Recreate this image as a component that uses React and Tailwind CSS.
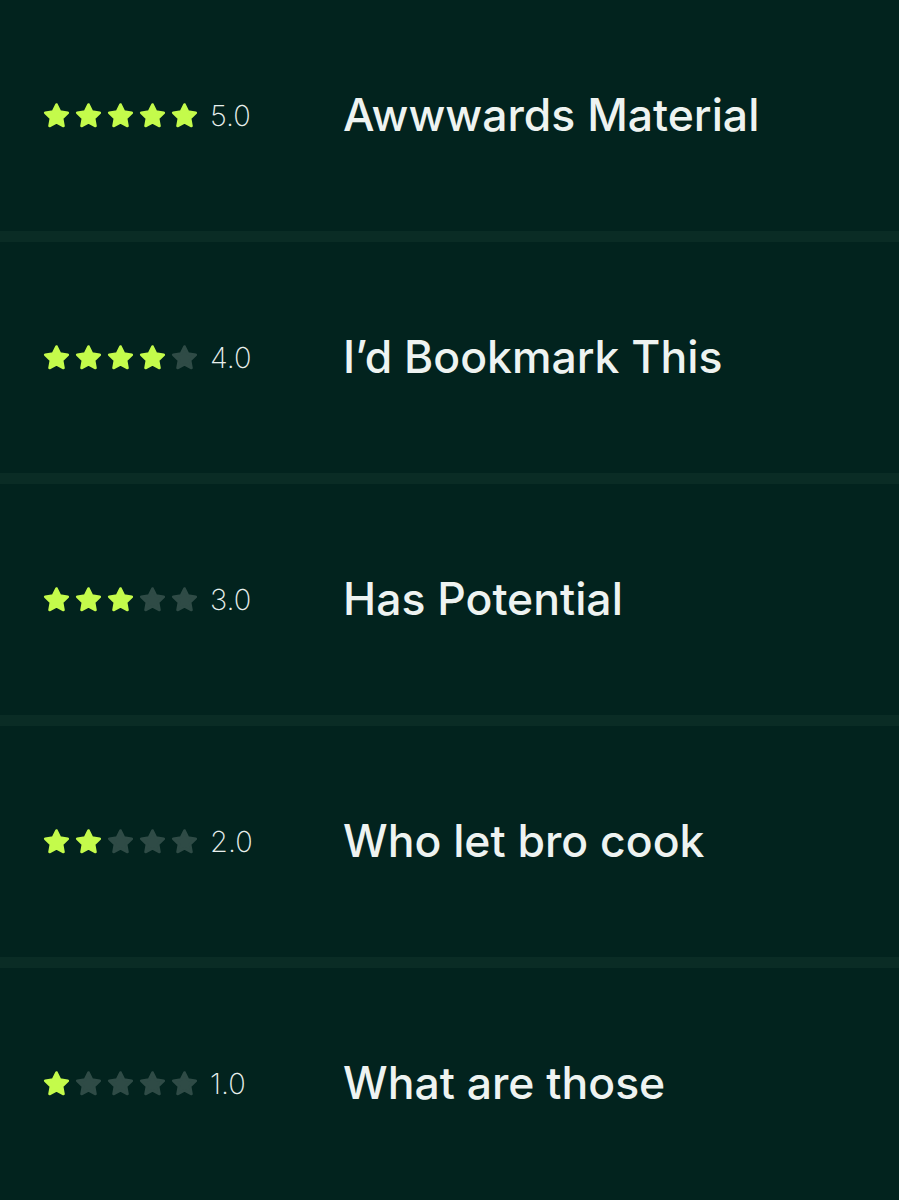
const ratings = [
  { score: 5, label: "Awwwards Material" },
  { score: 4, label: "I’d Bookmark This" },
  { score: 3, label: "Has Potential" },
  { score: 2, label: "Who let bro cook" },
  { score: 1, label: "What are those" },
];

function Star({ on }) {
  return (
    <svg
      width="27"
      height="27"
      viewBox="0 0 24 24"
      className={on ? "text-[#c4fb4b]" : "text-[#2f4b46]"}
    >
      <path
        d="M12 2.3L15.06 8.59 21.99 9.56 16.95 14.41 18.17 21.29 12 18 5.83 21.29 7.05 14.41 2.01 9.56 8.94 8.59z"
        fill="currentColor"
        stroke="currentColor"
        strokeWidth="2.4"
        strokeLinejoin="round"
      />
    </svg>
  );
}

export default function App() {
  return (
    <div
      className="w-full min-h-[1200px] bg-[#02231e]"
      style={{ fontFamily: "Inter, 'Liberation Sans', sans-serif" }}
    >
      {ratings.map((r, i) => (
        <div key={r.label}>
          {i > 0 && <div className="h-[11px] bg-[#0a2c25]" />}
          <div className="flex items-center h-[231px] pl-[43px]">
            <div className="w-[300px] flex items-center">
              <div className="flex items-center gap-[5px]">
                {[1, 2, 3, 4, 5].map((n) => (
                  <Star key={n} on={n <= r.score} />
                ))}
              </div>
              <span className="ml-[12px] text-[29px] font-extralight text-[#e8efed]">
                {r.score}.0
              </span>
            </div>
            <span className="text-[44.5px] font-medium text-[#eef3f1]">
              {r.label}
            </span>
          </div>
        </div>
      ))}
    </div>
  );
}
